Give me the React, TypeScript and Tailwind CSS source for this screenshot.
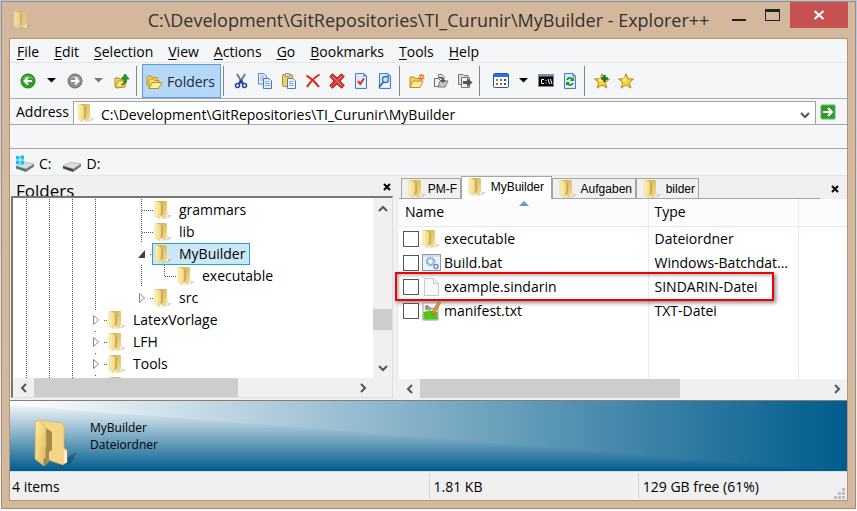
import React from "react";

type P = { children: React.ReactNode; w?: number; h?: number };

function Pic({ children, w = 16, h = 16 }: P) {
  return (
    <svg width={w} height={h} viewBox={`0 0 ${w} ${h}`} aria-hidden="true" className="block shrink-0">
      {children}
    </svg>
  );
}

function Folder() {
  return (
    <Pic w={18} h={20}>
      <defs>
        <linearGradient id="fl" x1="0" x2="1" y1="0" y2="0">
          <stop offset="0" stopColor="#fdf3ba" />
          <stop offset="1" stopColor="#efd67c" />
        </linearGradient>
        <linearGradient id="fr" x1="0" x2="1" y1="0" y2="1">
          <stop offset="0" stopColor="#d2ab45" />
          <stop offset="1" stopColor="#f6e29a" />
        </linearGradient>
      </defs>
      <path d="M11 15l7 0-3 3-8 1z" fill="#8b8f94" opacity=".35" />
      <path d="M3 1h9.500l.5 1v11l1 1v3l-2 1-8-2z" fill="url(#fr)" />
      <path d="M7 3l2 2v9l-2 2z" fill="#c49d3c" opacity=".7" />
      <path d="M1 1l4 1 2 2v9l-1 1v5l-5-3z" fill="url(#fl)" stroke="#e7cf80" strokeWidth=".5" />
      <path d="M13 14.500v3" stroke="#fff" />
    </Pic>
  );
}

const arrowBall = (fill: string, edge: string, d: string) => (
  <Pic>
    <circle cx="8" cy="8" r="7" fill={fill} stroke={edge} />
    <path d="M2.500 6a6 5 0 0 1 11 0c-3-1.500-8-1.500-11 0" fill="#fff" opacity=".3" />
    <path d={d} fill="none" stroke="#fff" strokeWidth="2" />
  </Pic>
);

const Caret = ({ color }: { color: string }) => (
  <Pic w={9} h={5}>
    <path d="M0 0h9L4.500 4.500z" fill={color} />
  </Pic>
);

const UpFolder = () => (
  <Pic>
    <path d="M1 5h4l1 1h5v8l-9 1-1-2z" fill="#f3cf55" stroke="#b98a1c" />
    <path d="M2 14l2-6h9l-3 6z" fill="#ffeb94" stroke="#c79a24" />
    <path d="M7 12c3-1 3-3 3-6H7.500L11 1l4 5h-2.500c0 4-2 6-5.500 6z" fill="#24a021" stroke="#116b12" strokeWidth=".7" />
  </Pic>
);
const OpenFolders = () => (
  <Pic w={17} h={16}>
    <path d="M1 12V3l1-1h3l1.500 1.500H11V6" fill="#f8d667" stroke="#c48a17" />
    <path d="M3 14V6l1-1h3l1.500 1.500H13V8" fill="#fbe48e" stroke="#c48a17" />
    <path d="M3 14.500l3-6h10l-3.500 6z" fill="#ffefa3" stroke="#c48a17" />
  </Pic>
);
const Cut = () => (
  <Pic>
    <path d="M4 1l6 10M12 1L6 11" stroke="#6b7b92" strokeWidth="2" />
    <path d="M8 7l-2 4M8 7l2 4" stroke="#1c3f9b" strokeWidth="2" />
    <circle cx="4.500" cy="12.500" r="2" fill="none" stroke="#1d44ae" strokeWidth="1.500" />
    <circle cx="11.500" cy="12.500" r="2" fill="none" stroke="#1d44ae" strokeWidth="1.500" />
  </Pic>
);
const Copy = () => (
  <Pic>
    <path d="M1.500.500H7L9.500 3v8h-8z" fill="#e9f2fd" stroke="#5c86cf" />
    <path d="M3 3h4M3 5h4M3 7h3" stroke="#86a8dd" />
    <path d="M6.500 5.500H12l2.500 2.500v7.500h-8z" fill="#e4effc" stroke="#4a76c5" />
    <path d="M8 8.500h4M8 10.500h5M8 12.500h5" stroke="#86a8dd" />
  </Pic>
);
const Paste = () => (
  <Pic>
    <rect x="1.500" y="1.500" width="10" height="12" rx="1.500" fill="#f5cf58" stroke="#b58a24" />
    <rect x="4" y=".5" width="5" height="3" rx="1" fill="#dcdcdc" stroke="#777" strokeWidth=".7" />
    <path d="M6.500 5.500H12l2.500 2.500v7.500h-8z" fill="#f0f6fe" stroke="#5679b5" />
    <path d="M8 8.500h4M8 10.500h5M8 12.500h5" stroke="#86a8dd" />
  </Pic>
);
const RedX = () => (
  <Pic>
    <path d="M1.500 2.500Q9 7 14 14M14.500 1.500Q7 6 2 14" fill="none" stroke="#e0240f" strokeWidth="2" />
  </Pic>
);
const BoldX = () => (
  <Pic>
    <path d="M3.500.800L8 5l4.500-4.200 2.700 2.700L11 8l4.200 4.500-2.700 2.700L8 11l-4.500 4.200-2.700-2.700L5 8 .8 3.500z" fill="#d9403c" stroke="#a31a1c" />
    <path d="M3.500 3.500l9 9M12.500 3.500l-3 3" stroke="#f08a83" />
  </Pic>
);
const Page = ({ children }: { children: React.ReactNode }) => (
  <Pic>
    <path d="M2.500.500H11L13.500 3v12.500h-11z" fill="#dbe9fd" stroke="#4a79d4" />
    <path d="M4 14h8V5L4 12z" fill="#fff" opacity=".6" />
    <path d="M10.500.500V3.500h3z" fill="#3c6fd6" />
    {children}
  </Pic>
);
const CheckPage = () => (
  <Page>
    <path d="M5 8l2.200 3L11 5.500" fill="none" stroke="#e32c15" strokeWidth="2" />
  </Page>
);
const FindPage = () => (
  <Page>
    <circle cx="8.500" cy="6.500" r="3" fill="#c5ecfb" stroke="#2d6fc0" strokeWidth="1.300" />
    <path d="M6.300 9L2 14.500" stroke="#3c6aa8" strokeWidth="2" />
  </Page>
);
const NewFolder = () => (
  <Pic>
    <path d="M1 14V4h4l1 1.500h6V8" fill="#f5d260" stroke="#c58f1c" />
    <path d="M1 14.500l3-6.500h10l-3 6.500z" fill="#ffeda0" stroke="#c58f1c" />
    <path d="M12.500 1v6M9.500 4h6M10.300 1.800l4.400 4.400M14.700 1.800l-4.400 4.400" stroke="#e65a1d" strokeWidth="1.200" />
    <circle cx="12.500" cy="4" r="1.200" fill="#ffe14d" />
  </Pic>
);
const CopyTo = () => (
  <Pic>
    <path d="M5.500 1.500H9l2 2v7H5.500z" fill="#eee" stroke="#777" />
    <path d="M1.500 5.500h4l2 2v6h-6z" fill="#f4f4f4" stroke="#666" />
    <path d="M5 14l2-6h8l-3 6z" fill="#c9c9c9" stroke="#777" />
    <path d="M6 4c3-1 5 1 5 3h2l-3 3-3-3h2c0-1-1-2-3-2z" fill="#555" />
  </Pic>
);
const MoveTo = () => (
  <Pic>
    <path d="M1.500 1.500H6l1 1h4v9h-9.500z" fill="#ddd" stroke="#777" />
    <path d="M4.500 4.500h8v10h-8z" fill="#f2f2f2" stroke="#777" />
    <path d="M6 8h4V5l5.500 4.500L10 14v-3H6z" fill="#555" />
  </Pic>
);
const Views = () => (
  <Pic w={16} h={15}>
    <rect x=".5" y=".5" width="15" height="14" rx="1" fill="#fff" stroke="#1b55c0" />
    <path d="M1 1h14v3H1z" fill="#2c6fe2" />
    <path d="M3 6h2v2H3zM7 10h2v2H7z" fill="#3da548" />
    <path d="M7 6h2v2H7zM3 10h2v2H3z" fill="#dc4a2c" />
    <path d="M11 6h2v2h-2zM11 10h2v2h-2z" fill="#284f9e" />
  </Pic>
);
const Cmd = () => (
  <Pic w={16} h={13}>
    <rect x=".5" y=".5" width="15" height="12" fill="#000" stroke="#7d8da0" />
    <path d="M1 1h14v1.500H1z" fill="#7396c8" />
    <path d="M6 5.500H3.500v4H6M8 6v1M8 8.500v1M10 5l1.500 5M12.500 5L14 10" fill="none" stroke="#fff" />
  </Pic>
);
const Refresh = () => (
  <Page>
    <path d="M5 7c1-2.500 4-2.500 5.500-.5M11 10c-1 2.500-4 2.500-5.500.5" fill="none" stroke="#159a22" strokeWidth="2" />
    <path d="M12 4v4H8zM4 13V9h4z" fill="#159a22" />
  </Page>
);
const Star = ({ plus }: { plus?: boolean }) => (
  <Pic>
    <path d="M8 .8l2 5 5.500.2-4.200 3.500 1.500 5.500L8 12l-4.800 3 1.500-5.500L.5 6 6 5.800z" fill="#fbd22e" stroke="#b6861a" />
    <path d="M8 3v6L4 7z" fill="#fff5a5" opacity=".8" />
    {plus && <path d="M10.500 2v7M7 5.500h7" stroke="#157a1b" strokeWidth="2.500" />}
  </Pic>
);

const Drive = ({ win }: { win?: boolean }) => (
  <Pic w={20} h={17}>
    <path d="M1 11l8-4 10 2-8 5z" fill="#dcdcdc" stroke="#999" strokeWidth=".6" />
    <path d="M1 11l10 3v3L1 13.500z" fill={win ? "#3f7f86" : "#444"} />
    <path d="M11 14l8-5v2.500L11 17z" fill="#777" />
    {win && <path d="M1 1h3.500v3.500H1zM5.500.500H9v4H5.500zM1 5.500h3.500V9H1zM5.500 5.500H9v4H5.500z" fill="#12c4f3" />}
  </Pic>
);

const chev: Record<string, string> = {
  left: "M7 1L3 5l4 4",
  right: "M3 1l4 4-4 4",
  up: "M1 7l4-4 4 4",
  down: "M1 3l4 4 4-4",
};
const Chevron = ({ dir }: { dir: string }) => (
  <Pic w={10} h={10}>
    <path d={chev[dir]} fill="none" stroke="#555" strokeWidth="2" />
  </Pic>
);
const CloseMark = () => (
  <Pic w={8} h={8}>
    <path d="M1 1l6 6M7 1L1 7" stroke="#000" strokeWidth="2" />
  </Pic>
);

function HScroll({ thumb, corner = "" }: { thumb: string; corner?: string }) {
  return (
    <div className={`flex h-[19px] shrink-0 items-center bg-[#f0f0f0] ${corner}`}>
      <button aria-label="Scroll left" className="flex h-full w-[21px] items-center justify-center"><Chevron dir="left" /></button>
      <div className="h-full min-w-0 flex-1">
        <div className={`h-full bg-[#cdcdcd] ${thumb}`} />
      </div>
      <button aria-label="Scroll right" className="flex h-full w-[21px] items-center justify-center"><Chevron dir="right" /></button>
    </div>
  );
}

const guides: Record<string, React.ReactNode> = {
  l: <path d="M11.500 0V22" />,
  n: null,
  t: <path d="M11.500 0V22M12 11.500H23" />,
  e: <path d="M11.500 0V11M12 11.500H23" />,
  o: <path d="M20 11.500H23" />,
  c: <path d="M20 11.500H23" />,
  d: <path d="M11.500 0V2M20 11.500H23" />,
};
function Guide({ kind }: { kind: string }) {
  return (
    <Pic w={23} h={22}>
      <g stroke="#555" strokeDasharray="1 1" fill="none">{guides[kind]}</g>
      {kind === "o" && <path d="M15 7v8H8z" fill="#404040" />}
      {(kind === "c" || kind === "d") && <path d="M9.500 6.500v9l5-4.500z" fill="#fff" stroke="#8a8a8a" />}
    </Pic>
  );
}

const tree: [string, string][] = [
  ["llllnt", "grammars"],
  ["llllnt", "lib"],
  ["llllno", "MyBuilder"],
  ["llllnle", "executable"],
  ["llllnc", "src"],
  ["llld", "LatexVorlage"],
  ["llld", "LFH"],
  ["llld", "Tools"],
  ["llld", ""],
];

const Sep = () => <span className="mr-[5px] ml-[2px] h-[30px] w-px shrink-0 bg-[#858585]" />;
const Tool = ({ label, children, cls = "w-6" }: { label: string; children: React.ReactNode; cls?: string }) => (
  <button aria-label={label} className={`flex h-8 shrink-0 items-center justify-center ${cls}`}>{children}</button>
);

const BatIcon = () => (
  <Pic w={19} h={17}>
    <rect x=".5" y=".5" width="18" height="16" fill="#eef3f8" stroke="#8b98a8" />
    <path d="M1 1h17v2H1z" fill="#d4dde8" />
    <circle cx="8.500" cy="7.500" r="4" fill="none" stroke="#6ea2d0" strokeWidth="1.500" strokeDasharray="1.500 1" />
    <circle cx="8.500" cy="7.500" r="3" fill="#fff" stroke="#8dbbe0" strokeWidth="1.500" />
    <circle cx="14" cy="12.500" r="2" fill="#fff" stroke="#6d93b8" strokeWidth="1.500" />
  </Pic>
);
const BlankIcon = () => (
  <Pic w={19} h={18}>
    <path d="M2.500.500h9l5 5v12h-14z" fill="#f9f9f9" stroke="#c9c9c9" />
    <path d="M11.500.500v5h5z" fill="#fff" stroke="#c9c9c9" />
  </Pic>
);
const TxtIcon = () => (
  <Pic w={19} h={20}>
    <path d="M1 2h15v17H1z" fill="#f4f4f0" stroke="#9a9a9a" />
    <path d="M1.500 11q7-3 14 0v7.500h-14z" fill="#54c41d" />
    <path d="M4 9V5h2v4M8 9V6M10 8V7M12 8V7" fill="none" stroke="#444" />
    <path d="M16.500.500L18.500 2 12 13l-2 1 0-3z" fill="#f0952a" stroke="#8a5a20" strokeWidth=".6" />
  </Pic>
);

const files = [
  { name: "executable", type: "Dateiordner", icon: <Folder /> },
  { name: "Build.bat", type: "Windows-Batchdat...", icon: <BatIcon /> },
  { name: "example.sindarin", type: "SINDARIN-Datei", icon: <BlankIcon />, marked: true },
  { name: "manifest.txt", type: "TXT-Datei", icon: <TxtIcon /> },
];

const menus = ["File", "Edit", "Selection", "View", "Actions", "Go", "Bookmarks", "Tools", "Help"];
const tabs = [
  { name: "PM-F", w: "w-[60px]" },
  { name: "MyBuilder", w: "w-[91px]", active: true },
  { name: "Aufgaben", w: "w-[84px]" },
  { name: "bilder", w: "w-[63px]" },
];

export default function App() {
  return (
    <div className="h-screen min-h-[440px] bg-linear-to-b from-[#a9c8ee] via-[#d3e2f2] to-[#f4f6f8] pt-px pr-px pb-[2px] pl-px font-['Open_Sans','Noto_Sans',sans-serif] text-[14px] leading-[20px] text-black">
      <div className="flex h-full flex-col border border-[#a58a70] bg-[#d4b89c] px-[7px] pb-[7px]">
        <header className="relative flex h-[36px] shrink-0 items-start justify-end">
          <div className="absolute top-[8px] left-[4px] opacity-70"><Folder /></div>
          <h1 className="absolute inset-x-0 top-[4px] text-center text-[18px] leading-[28px] whitespace-nowrap text-[#333]">
            C:\Development\GitRepositories\TI_Curunir\MyBuilder - Explorer++
          </h1>
          <div className="relative flex">
            <button aria-label="Minimize" className="flex h-[26px] w-8 items-end justify-center pb-[7px]">
              <span className="h-[2px] w-[14px] bg-[#222]" />
            </button>
            <button aria-label="Maximize" className="flex h-[26px] w-[35px] items-center justify-center">
              <span className="h-[12px] w-[15px] border border-t-[3px] border-[#222]" />
            </button>
            <button aria-label="Close" className="flex h-[26px] w-[58px] items-center justify-center bg-[#c75050]">
              <Pic w={12} h={10}>
                <path d="M1.500 1l9 8M10.500 1l-9 8" stroke="#fff" strokeWidth="2.200" />
              </Pic>
            </button>
          </div>
        </header>

        <main className="flex min-h-0 flex-1 flex-col border border-[#b0937a] bg-[#f5f6f7]">
          <nav className="flex h-[24px] shrink-0 items-center gap-[15px] border-b border-[#e4e5e7] pt-[2px] pl-[7px]">
            {menus.map((m) => (
              <button key={m} className="leading-[20px]">
                <span className="underline underline-offset-2">{m[0]}</span>
                {m.slice(1)}
              </button>
            ))}
          </nav>

          <div className="flex h-[36px] shrink-0 items-center border-b border-[#a9a9ad] pl-[6px]">
            <Tool label="Back">{arrowBall("#2fa51f", "#187a12", "M12 8H5M8 4.500L4.500 8 8 11.500")}</Tool>
            <Tool label="Back history" cls="w-[23px]"><Caret color="#000" /></Tool>
            <Tool label="Forward">{arrowBall("#8c8c8c", "#6c6c6c", "M4 8h7M8 4.500L11.500 8 8 11.500")}</Tool>
            <Tool label="Forward history" cls="w-[23px]"><Caret color="#777" /></Tool>
            <Tool label="Up"><UpFolder /></Tool>
            <Sep />
            <button className="flex h-[34px] w-[79px] shrink-0 items-center gap-1 border border-[#569de5] bg-[#b5d7f8] pt-[2px] pl-[3px] text-[#1c2a3a]">
              <OpenFolders />
              Folders
            </button>
            <Sep />
            <Tool label="Cut"><Cut /></Tool>
            <Tool label="Copy"><Copy /></Tool>
            <Tool label="Paste"><Paste /></Tool>
            <Tool label="Delete"><RedX /></Tool>
            <Tool label="Delete permanently"><BoldX /></Tool>
            <Tool label="Properties"><CheckPage /></Tool>
            <Tool label="Search"><FindPage /></Tool>
            <Sep />
            <Tool label="New folder"><NewFolder /></Tool>
            <Tool label="Copy to"><CopyTo /></Tool>
            <Tool label="Move to"><MoveTo /></Tool>
            <Sep />
            <Tool label="Views" cls="ml-1 w-6"><Views /></Tool>
            <Tool label="Views menu" cls="w-[21px]"><Caret color="#000" /></Tool>
            <Tool label="Command prompt"><Cmd /></Tool>
            <Tool label="Refresh"><Refresh /></Tool>
            <Sep />
            <Tool label="Add bookmark"><Star plus /></Tool>
            <Tool label="Organize bookmarks"><Star /></Tool>
          </div>

          <div className="flex h-[26px] shrink-0 items-end border-b border-[#a9a9ad] pl-[6px]">
            <label htmlFor="address" className="w-[57px] shrink-0 self-center leading-[20px]">Address</label>
            <div className="flex h-[23px] min-w-0 flex-1 items-center border border-b-0 border-[#a0a0a4] bg-white pl-[3px]">
              <Folder />
              <input id="address" defaultValue="C:\Development\GitRepositories\TI_Curunir\MyBuilder" className="h-[20px] min-w-0 flex-1 self-end bg-transparent pt-[2px] pl-[6px] outline-none" />
              <button aria-label="Address history" className="flex h-full w-5 items-center justify-center pt-1"><Chevron dir="down" /></button>
            </div>
            <button aria-label="Go" className="flex h-full w-[31px] items-center pl-1">
              <Pic>
                <rect x="1" y="1" width="14" height="14" rx="1" fill="#2c9a2c" stroke="#5fb85f" />
                <path d="M3 8h8M8 4l4 4-4 4" fill="none" stroke="#fff" strokeWidth="2" />
              </Pic>
            </button>
          </div>

          <div className="h-[24px] shrink-0 border-b border-[#a9a9ad]" />

          <div className="flex h-[27px] shrink-0 items-center gap-[6px] border-b border-[#e6e6e8] pt-[3px] pl-[5px]">
            <button className="flex items-center gap-1"><Drive win />C:</button>
            <button className="ml-1 flex items-center gap-[5px]"><Drive />D:</button>
          </div>

          <div className="flex min-h-0 flex-1 bg-[#f0f0f0]">
            <section className="flex w-[383px] shrink-0 flex-col pb-[2px] pl-px">
              <div className="flex h-[20px] shrink-0 items-center justify-between overflow-hidden pr-[2px] pl-[5px]">
                <h2 className="pt-[9px] text-[17px] leading-[22px]">Folders</h2>
                <button aria-label="Close folders" className="pt-[2px]"><CloseMark /></button>
              </div>
              <div className="flex min-h-0 flex-1 flex-col border-t-2 border-r border-b border-l-2 border-t-[#777] border-r-[#ddd] border-b-[#ddd] border-l-[#777]">
                <div className="flex min-h-0 flex-1">
                  <ul className="min-w-0 flex-1 overflow-hidden bg-white pt-px pl-[2px]">
                    {tree.map(([g, name], i) => (
                      <li key={i} className="flex h-[22px]">
                        {g.split("").map((k, j) => <Guide key={j} kind={k} />)}
                        <span className={name === "MyBuilder" ? "-ml-px flex items-center gap-[7px] border border-[#26a0da] bg-[#cbe8f6] pr-1 pl-px" : "flex items-center gap-[7px] pl-px"}>
                          <Folder />
                          {name}
                        </span>
                      </li>
                    ))}
                  </ul>
                  <div className="flex w-[19px] shrink-0 flex-col items-center bg-[#f0f0f0]">
                    <button aria-label="Scroll up" className="flex h-[21px] items-center"><Chevron dir="up" /></button>
                    <div className="flex min-h-0 w-full flex-1 flex-col">
                      <div className="h-[65%]" />
                      <div className="h-[21px] w-full bg-[#cdcdcd]" />
                    </div>
                    <button aria-label="Scroll down" className="flex h-[21px] items-center"><Chevron dir="down" /></button>
                  </div>
                </div>
                <HScroll thumb="w-[64%]" corner="mr-[19px]" />
              </div>
            </section>
            <div className="w-[6px] shrink-0 cursor-col-resize" />
            <section className="flex min-w-0 flex-1 flex-col">
              <div className="flex h-[23px] shrink-0 items-end pr-2">
                <div role="tablist" className="flex min-w-0 flex-1 items-end border-b border-[#a5a5a5] pl-[2px] font-['Liberation_Sans',Arial,sans-serif] text-[12px] leading-[16px]">
                  {tabs.map((t) => (
                    <button
                      key={t.name}
                      role="tab"
                      aria-selected={!!t.active}
                      className={`flex shrink-0 items-center justify-between border border-b-0 border-[#a5a5a5] pl-[6px] ${t.w} ${t.active ? "-mb-px h-[23px] bg-white pr-[7px] pb-[2px]" : "h-[20px] pr-[3px]"}`}
                    >
                      <Folder />
                      {t.name}
                    </button>
                  ))}
                </div>
                <button aria-label="Close tab" className="mb-[6px] ml-[11px]"><CloseMark /></button>
              </div>
              <div className="min-h-0 flex-1 bg-white">
                <table className="h-full w-full table-fixed border-collapse text-left">
                  <colgroup>
                    <col className="w-[249px]" />
                    <col className="w-[150px]" />
                    <col />
                  </colgroup>
                  <thead>
                    <tr className="h-[27px] border-b border-[#e3ecf8] bg-[#fcfcfc]">
                      <th className="relative border-r border-[#e3ecf8] pl-[6px] font-normal">
                        Name
                        <svg className="absolute top-[2px] left-[120px]" width="10" height="5" viewBox="0 0 10 5" aria-hidden="true">
                          <path d="M5 0l5 5H0z" fill="#6d9cc0" />
                        </svg>
                      </th>
                      <th className="border-r border-[#e3ecf8] pl-[6px] font-normal">Type</th>
                      <th />
                    </tr>
                  </thead>
                  <tbody>
                    {files.map((f) => (
                      <tr key={f.name} className="h-[24px]">
                        <td className="relative border-r border-[#e3ecf8] p-0">
                          <label className="flex h-[24px] items-center pl-1">
                            <input type="checkbox" className="mr-[3px] size-4 shrink-0 appearance-none border border-[#555] bg-white" />
                            <span className="w-[22px] shrink-0">{f.icon}</span>
                            {f.name}
                          </label>
                          {f.marked && (
                            <div className="pointer-events-none absolute top-[-3px] left-[-4px] h-[29px] w-[379px] border-2 border-[#f00000] shadow-[2px_2px_4px_rgba(0,0,0,0.45),inset_2px_2px_3px_rgba(0,0,0,0.25)]" />
                          )}
                        </td>
                        <td className="border-r border-[#e3ecf8] p-0 pl-[6px] whitespace-nowrap">{f.type}</td>
                        <td />
                      </tr>
                    ))}
                    <tr>
                      <td className="border-r border-[#e3ecf8]" />
                      <td className="border-r border-[#e3ecf8]" />
                      <td />
                    </tr>
                  </tbody>
                </table>
              </div>
              <HScroll thumb="w-[64%]" />
              <div className="h-[2px] shrink-0" />
            </section>
          </div>

          <section className="relative flex h-[71px] shrink-0 items-end border-t border-[#808080] pb-[2px] pl-[24px]">
            <svg className="absolute inset-0 size-full" viewBox="0 0 837 70" preserveAspectRatio="none" aria-hidden="true">
              <defs>
                <linearGradient id="down" x1="0" x2="0" y1="0" y2="1">
                  <stop offset="0" stopColor="#fff" />
                  <stop offset="1" stopColor="#005c8c" />
                </linearGradient>
                <linearGradient id="across" x1="0" x2="1" y1="0" y2="0">
                  <stop offset="0" stopColor="#fff" />
                  <stop offset="1" stopColor="#005c8c" />
                </linearGradient>
              </defs>
              <rect width="837" height="70" fill="url(#down)" />
              <path d="M0 0H837V70Q420 36 0 4z" fill="url(#across)" />
            </svg>
            <div className="relative flex items-start gap-[12px]">
              <Pic w={44} h={50}>
                <defs>
                  <linearGradient id="big" x1="0" x2="1" y1="0" y2="1">
                    <stop offset="0" stopColor="#fff0a0" />
                    <stop offset="1" stopColor="#e2b65c" />
                  </linearGradient>
                </defs>
                <path d="M30 40l13-7-6 11-12 4z" fill="#0a3550" opacity=".4" />
                <path d="M5 1l22 3 3 2v23l3 2v12l-4 3-20-7z" fill="#f5d587" stroke="#d8af55" strokeWidth=".7" />
                <path d="M12 9l6 4v18l-3 2v10l-4 4z" fill="#a98a49" />
                <path d="M1.500 3L5 1l7 8v19l-2 2v17l-9-7z" fill="url(#big)" stroke="#d7ac50" strokeWidth=".7" />
                <path d="M31.500 32v12" stroke="#fff" strokeWidth="2" />
              </Pic>
              <div className="text-[12px] leading-[17px]">
                <p>MyBuilder</p>
                <p>Dateiordner</p>
              </div>
            </div>
          </section>

          <footer className="flex h-[29px] shrink-0 items-stretch border-t border-[#dcdcdc] bg-[#f0f0f0] pt-px pb-px leading-[28px]">
            <div className="w-1/2 pl-[2px]">4 items</div>
            <div className="w-1/4 border-l border-[#d4d4d4] pl-1">1.81 KB</div>
            <div className="flex w-1/4 items-start justify-between border-l border-[#d4d4d4] pr-[2px] pl-1 whitespace-nowrap">
              129 GB free (61%)
              <span className="self-end">
                <Pic w={11} h={11}>
                  <path d="M8 0h3v3H8zM4 4h3v3H4zM8 4h3v3H8zM0 8h3v3H0zM4 8h3v3H4zM8 8h3v3H8z" fill="#bdbdbd" />
                </Pic>
              </span>
            </div>
          </footer>
        </main>
      </div>
    </div>
  );
}
